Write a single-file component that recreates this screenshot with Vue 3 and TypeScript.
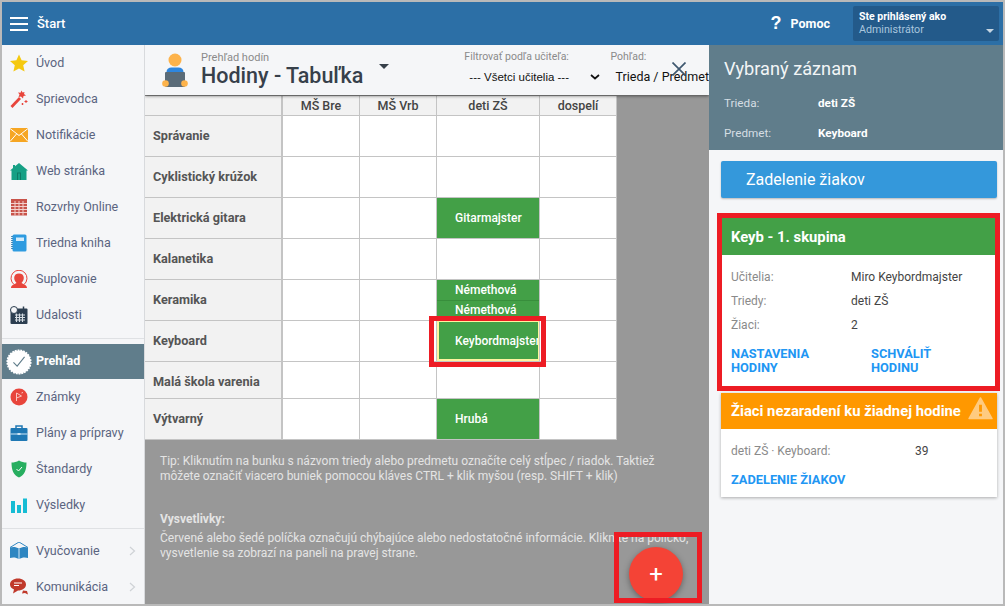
<script setup lang="ts">
interface NavItem {
  id: string;
  label: string;
  arrow?: boolean;
}

interface Cell {
  text: string[];
  marked?: boolean;
}

interface Row {
  name: string;
  short?: boolean;
  cells: Record<number, Cell>;
}

const navTop: NavItem[] = [
  { id: 'star', label: 'Úvod' },
  { id: 'wand', label: 'Sprievodca' },
  { id: 'mail', label: 'Notifikácie' },
  { id: 'home', label: 'Web stránka' },
  { id: 'grid', label: 'Rozvrhy Online' },
  { id: 'book', label: 'Triedna kniha' },
  { id: 'user', label: 'Suplovanie' },
  { id: 'cal', label: 'Udalosti' },
];

const navMid: NavItem[] = [
  { id: 'grade', label: 'Známky' },
  { id: 'case', label: 'Plány a prípravy' },
  { id: 'shield', label: 'Štandardy' },
  { id: 'bars', label: 'Výsledky' },
];

const navBottom: NavItem[] = [
  { id: 'open', label: 'Vyučovanie', arrow: true },
  { id: 'chat', label: 'Komunikácia', arrow: true },
];

const columns = ['MŠ Bre', 'MŠ Vrb', 'deti ZŠ', 'dospelí'];

const rows: Row[] = [
  { name: 'Správanie', cells: {} },
  { name: 'Cyklistický krúžok', cells: {} },
  { name: 'Elektrická gitara', cells: { 2: { text: ['Gitarmajster'] } } },
  { name: 'Kalanetika', cells: {} },
  { name: 'Keramika', cells: { 2: { text: ['Némethová', 'Némethová'] } } },
  { name: 'Keyboard', cells: { 2: { text: ['Keybordmajster'], marked: true } } },
  { name: 'Malá škola varenia', short: true, cells: {} },
  { name: 'Výtvarný', cells: { 2: { text: ['Hrubá'] } } },
];
</script>

<template>
  <div class="screen">
    <header class="topbar">
      <div class="burger"><span></span><span></span><span></span></div>
      <div class="brand">Štart</div>
      <div class="help"><span class="qmark">?</span><span>Pomoc</span></div>
      <div class="account">
        <div class="acc-title">Ste prihlásený ako</div>
        <div class="acc-role">Administrátor</div>
        <i class="acc-caret"></i>
      </div>
    </header>

    <div class="body">
      <nav class="sidebar">
        <div class="nav-group">
          <div v-for="item in navTop" :key="item.id" class="nav-item">
            <svg class="nav-icon" viewBox="1 1 18 18">
              <template v-if="item.id === 'star'">
                <path d="M10 1.500l2.600 5.800 6.400.7-4.800 4.300 1.400 6.300L10 15.400l-5.600 3.200 1.400-6.300L1 8l6.400-.7z" fill="#f5c90f" />
              </template>
              <template v-else-if="item.id === 'wand'">
                <path d="M1.500 17l8.500-9 2 2-8.500 9z" fill="#e8453c" />
                <path d="M12.500 1.500l1 2 2-.5-.5 2 2 1.500-2.500.5-.5 2.500-2-2-2.500.5 1-2.500-1.500-2 2.500.2z" fill="#e8453c" />
                <path d="M15.500 12.500h3M17 11v3M12.500 15h2M13.500 14v2" stroke="#e8453c" stroke-width="1" />
              </template>
              <template v-else-if="item.id === 'mail'">
                <rect x="1" y="3" width="18" height="14" fill="#f6a623" />
                <path d="M1 3.500l9 7 9-7M1 16.500l6.500-7.500M19 16.500L12.500 9" fill="none" stroke="#fff" stroke-width="1" />
              </template>
              <template v-else-if="item.id === 'home'">
                <path d="M10 2l9 7.500h-1.500V19h-15V9.500H1l3-2.500V4h2v1.300z" fill="#16a085" />
                <rect x="8" y="11.500" width="4" height="7.500" fill="#0e7a65" />
                <rect x="9" y="12.500" width="2" height="6.500" fill="#16a085" />
              </template>
              <template v-else-if="item.id === 'grid'">
                <rect x="2" y="2" width="16" height="16.500" fill="#c8534a" />
                <path d="M2 6.500h16M2 9.500h16M2 12.500h16M2 15.500h16M6 4v14.500M10 4v14.500M14 4v14.500" stroke="#f3d0cc" stroke-width="1" />
              </template>
              <template v-else-if="item.id === 'book'">
                <rect x="3.500" y="1.500" width="14" height="17" rx="1.500" fill="#2e9be0" />
                <rect x="7" y="4.500" width="8" height="3.500" fill="#d3ecfb" />
                <path d="M3 3v14" stroke="#1a6fa8" stroke-width="1.500" stroke-dasharray="1 1" />
              </template>
              <template v-else-if="item.id === 'user'">
                <path d="M2 19c0-3 3-3.500 5.500-5-1.500-1.500-2.300-3-2.300-5.200C5.200 6 7.200 4.500 10 4.500s4.800 1.500 4.800 4.300c0 2.200-.8 3.700-2.300 5.200 2.500 1.500 5.500 2 5.500 5z" fill="#e8453c" />
                <path d="M5 15.500a8 8 0 1 1 10 0" fill="none" stroke="#e8453c" stroke-width="1" />
              </template>
              <template v-else>
                <rect x="1.500" y="3.500" width="17" height="15.500" rx="1" fill="#2c3e50" />
                <path d="M6 10h10M6 12.500h10M6 15h10M7.500 8.500v8.500M10.500 8.500v8.500M13.500 8.500v8.500" stroke="#d5dce2" stroke-width="1.100" />
                <circle cx="5" cy="5" r="3.500" fill="#f5f6f8" stroke="#2c3e50" />
                <path d="M14.500 1.500v3" stroke="#2c3e50" stroke-width="1.500" />
              </template>
            </svg>
            <span>{{ item.label }}</span>
          </div>
        </div>

        <div class="nav-line"></div>

        <div class="nav-active">
          <svg class="check" viewBox="0 0 28 28">
            <circle cx="14" cy="14" r="12.500" fill="#fff" stroke="#fff" stroke-width="2" stroke-dasharray="2 1" />
            <path d="M8 14.500l4 4 8-10" fill="none" stroke="#607d8b" stroke-width="1.200" />
          </svg>
          <span>Prehľad</span>
        </div>

        <div class="nav-group">
          <div v-for="item in navMid" :key="item.id" class="nav-item">
            <svg class="nav-icon" viewBox="1 1 18 18">
              <template v-if="item.id === 'grade'">
                <circle cx="10" cy="10" r="8.500" fill="#e8453c" />
                <path d="M7.500 14V6l5 3-5 2M12.500 6l1.500-.5" fill="none" stroke="#f9c5c1" stroke-width="1" />
              </template>
              <template v-else-if="item.id === 'case'">
                <path d="M7 5V3h6v2" fill="none" stroke="#1f78b4" stroke-width="1.500" />
                <rect x="1.500" y="5" width="17" height="13" rx="1" fill="#1f78b4" />
                <path d="M1.500 11h17" stroke="#cfe6f5" stroke-width="1" />
                <rect x="8.500" y="10" width="3" height="2" fill="#cfe6f5" />
              </template>
              <template v-else-if="item.id === 'shield'">
                <path d="M10 1.500c2.500 1.500 5 2 7.500 2 0 8-2 12.500-7.500 15-5.500-2.500-7.500-7-7.500-15 2.500 0 5-.5 7.500-2z" fill="#27ae60" />
                <path d="M7.500 10l2 2 3.500-4" fill="none" stroke="#fff" stroke-width="1" />
              </template>
              <template v-else>
                <rect x="2" y="6" width="4" height="12" fill="#16bcd4" />
                <rect x="8" y="10" width="4" height="8" fill="#16bcd4" />
                <rect x="14" y="3.500" width="4" height="14.500" fill="#16bcd4" />
              </template>
            </svg>
            <span>{{ item.label }}</span>
          </div>
        </div>

        <div class="nav-line second"></div>

        <div class="nav-group">
          <div v-for="item in navBottom" :key="item.id" class="nav-item">
            <svg class="nav-icon" viewBox="1 1 18 18">
              <template v-if="item.id === 'open'">
                <path d="M1 6.500L10 1l9 5.500" fill="none" stroke="#2e86c1" stroke-width="1" />
                <path d="M1 6.500c3-1 6.500-.5 9 1 2.500-1.500 6-2 9-1V17c-3-1-6.500-.5-9 1-2.500-1.500-6-2-9-1z" fill="#2e86c1" />
                <path d="M10 7.500V18" stroke="#d6eaf8" stroke-width="1" />
              </template>
              <template v-else>
                <path d="M9 1.500c4.500 0 8 2.500 8 6s-3.500 6-8 6l-5 3 1-4C2.500 11.500 1 9.500 1 7.500c0-3.500 3.500-6 8-6z" fill="#c0392b" />
                <path d="M5 6h8M5 8.500h5" stroke="#fff" stroke-width="1" />
                <path d="M14 13.500l4 .5 1 3.500-3-1.500-3 .5z" fill="#c0392b" />
              </template>
            </svg>
            <span>{{ item.label }}</span>
            <svg v-if="item.arrow" class="chev" viewBox="0 0 7 10">
              <path d="M1 1l4.500 4L1 9" fill="none" stroke="#cfd2d6" stroke-width="1.200" />
            </svg>
          </div>
        </div>
      </nav>

      <main class="main">
        <div class="pagehead">
          <svg class="avatar" viewBox="0 0 26 36">
            <circle cx="13" cy="8" r="6.500" fill="#fdb34b" />
            <path d="M4.500 20c0-3 2-4.500 5-4.500h7c3 0 5 1.500 5 4.500v1h-17z" fill="#2e86de" />
            <rect x="3" y="20" width="20" height="15" rx="1" fill="#5a6b78" />
            <circle cx="3.500" cy="31.500" r="3.300" fill="#fdb34b" />
            <circle cx="22.500" cy="31.500" r="3.300" fill="#fdb34b" />
          </svg>
          <div class="titles">
            <div class="subtitle">Prehľad hodín</div>
            <div class="title">Hodiny - Tabuľka</div>
          </div>
          <i class="title-caret"></i>
          <div class="filter teacher">
            <label>Filtrovať podľa učiteľa:</label>
            <div class="select">
              <span>--- Všetci učitelia ---</span>
              <svg viewBox="0 0 10 6"><path d="M1 1l4 3.500L9 1" fill="none" stroke="#111" stroke-width="1.700" /></svg>
            </div>
          </div>
          <div class="filter view">
            <label>Pohľad:</label>
            <div class="select">Trieda / Predmet</div>
          </div>
          <svg class="close" viewBox="0 0 14 14">
            <path d="M.5.5l13 13M13.500.5l-13 13" stroke="#3f5870" stroke-width="1.700" />
          </svg>
        </div>

        <div class="content">
          <div class="table">
            <div class="th corner"></div>
            <div v-for="col in columns" :key="col" class="th">{{ col }}</div>
            <template v-for="row in rows" :key="row.name">
              <div class="rowname" :class="{ short: row.short }">{{ row.name }}</div>
              <div v-for="(col, i) in columns" :key="col" class="cell">
                <div
                  v-if="row.cells[i]"
                  class="lesson"
                  :class="{ marked: row.cells[i].marked, split: row.cells[i].text.length > 1 }"
                >
                  <div v-for="(t, n) in row.cells[i].text" :key="n" class="lesson-part">{{ t }}</div>
                </div>
              </div>
            </template>
          </div>

          <div class="notes">
            <p class="tip">Tip: Kliknutím na bunku s názvom triedy alebo predmetu označíte celý stĺpec / riadok. Taktiež môžete označiť viacero buniek pomocou kláves CTRL + klik myšou (resp. SHIFT + klik)</p>
            <p class="legend-title">Vysvetlivky:</p>
            <p class="legend">Červené alebo šedé políčka označujú chýbajúce alebo nedostatočné informácie. Kliknite na políčko, vysvetlenie sa zobrazí na paneli na pravej strane.</p>
          </div>
        </div>
        <div class="fab">+</div>
      </main>

      <aside class="panel">
        <div class="panel-head">
          <h2>Vybraný záznam</h2>
          <div class="head-row"><span>Trieda:</span><b>deti ZŠ</b></div>
          <div class="head-row"><span>Predmet:</span><b>Keyboard</b></div>
        </div>
        <div class="panel-body">
          <div class="assign">Zadelenie žiakov</div>
          <section class="card">
            <div class="card-head green">Keyb - 1. skupina</div>
            <div class="card-body">
              <div class="info"><span>Učitelia:</span><em>Miro Keybordmajster</em></div>
              <div class="info"><span>Triedy:</span><em>deti ZŠ</em></div>
              <div class="info"><span>Žiaci:</span><em>2</em></div>
              <div class="links">
                <a>NASTAVENIA HODINY</a>
                <a>SCHVÁLIŤ HODINU</a>
              </div>
            </div>
          </section>
          <section class="card warn">
            <div class="card-head orange">
              Žiaci nezaradení ku žiadnej hodine
              <svg class="warn-icon" viewBox="0 0 26 24">
                <path d="M13 1l12 21.500H1z" fill="#ffcb80" stroke="#ffcb80" stroke-width="1.500" stroke-linejoin="round" />
                <path d="M13 8v7.500M13 17.500v2.500" stroke="#ff9800" stroke-width="3" />
              </svg>
            </div>
            <div class="card-body">
              <div class="info wide"><span>deti ZŠ · Keyboard:</span><em>39</em></div>
              <div class="links single"><a>ZADELENIE ŽIAKOV</a></div>
            </div>
          </section>
        </div>
      </aside>
    </div>

    <div class="frame frame-cell"></div>
    <div class="frame frame-card"></div>
    <div class="frame frame-fab"></div>
  </div>
</template>

<style scoped>
.screen {
  position: relative;
  box-sizing: border-box;
  width: 1005px;
  height: 606px;
  padding: 2px;
  background: #b9b9b9;
  display: flex;
  flex-direction: column;
  overflow: hidden;
  font-family: Roboto, "Liberation Sans", sans-serif;
  color: #333;
}

.topbar {
  flex: 0 0 43px;
  display: flex;
  align-items: center;
  background: #2c6fa6;
  color: #fff;
  padding-left: 8px;
}
.burger {
  width: 18px;
  display: flex;
  flex-direction: column;
  gap: 4px;
}
.burger span {
  height: 2px;
  background: #fff;
}
.brand {
  margin-left: 9px;
  font-size: 13px;
  font-weight: 500;
}
.help {
  margin-left: auto;
  display: flex;
  align-items: center;
  font-size: 12.500px;
  font-weight: 700;
}
.qmark {
  font-size: 18px;
  margin-right: 9px;
  font-family: "Liberation Sans", sans-serif;
}
.account {
  position: relative;
  box-sizing: border-box;
  width: 146px;
  height: 35px;
  margin: 0 4px 0 23px;
  padding: 5px 6px;
  background: #235a8a;
  border-radius: 2px;
}
.acc-title {
  font-size: 10.500px;
  font-weight: 700;
  line-height: 12px;
}
.acc-role {
  font-size: 10.700px;
  line-height: 14px;
  color: #a9c6de;
}
.acc-caret {
  position: absolute;
  right: 5px;
  bottom: 8px;
  border: 4px solid transparent;
  border-top-color: #c5d5e2;
  border-bottom-width: 0;
}

.body {
  flex: 1;
  min-height: 0;
  display: flex;
}

.sidebar {
  flex: 0 0 143px;
  box-sizing: border-box;
  background: #f5f6f8;
  border-right: 1px solid #d8dadd;
}
.nav-item {
  height: 36px;
  display: flex;
  align-items: center;
  padding-left: 8px;
  font-size: 12.500px;
  color: #5a6480;
}
.nav-item span,
.nav-active span {
  margin-bottom: 2px;
}
.nav-icon {
  width: 18px;
  height: 18px;
  flex: none;
  margin-right: 8px;
}
.chev {
  width: 7px;
  height: 10px;
  margin-left: auto;
  margin-right: 8px;
}
.nav-line {
  height: 1px;
  background: #dfe1e4;
  margin-top: 5px;
}
.nav-line.second {
  margin-bottom: 4px;
}
.nav-active {
  height: 35px;
  margin-top: 5px;
  display: flex;
  align-items: center;
  padding-left: 4px;
  background: #607d8b;
  color: #fff;
  font-size: 12.500px;
  font-weight: 700;
}
.check {
  width: 26px;
  height: 26px;
  margin-right: 4px;
}

.main {
  position: relative;
  flex: 0 0 564px;
  display: flex;
  flex-direction: column;
  background: #989898;
  overflow: hidden;
}

.pagehead {
  position: relative;
  z-index: 1;
  flex: 0 0 50px;
  display: flex;
  align-items: center;
  background: #f5f6f8;
  box-shadow: 0 1px 3px rgba(0, 0, 0, 0.5);
  white-space: nowrap;
}
.avatar {
  width: 26px;
  height: 36px;
  margin-left: 17px;
  flex: none;
}
.titles {
  margin-left: 13px;
  width: 183px;
}
.subtitle {
  font-size: 11px;
  color: #8a8a8a;
  line-height: 12px;
}
.title {
  font-size: 21.500px;
  font-weight: 500;
  line-height: 24px;
  color: #37404a;
}
.title-caret {
  margin: -8px 0 0 0;
  border: 5px solid transparent;
  border-top-color: #37404a;
  border-bottom-width: 0;
}
.filter {
  align-self: stretch;
  padding-top: 5px;
}
.filter label {
  display: block;
  font-size: 10.500px;
  line-height: 13px;
  color: #8a8a8a;
}
.select {
  display: flex;
  align-items: center;
  margin-top: 6px;
  font-size: 12.500px;
  line-height: 16px;
  color: #111;
}
.teacher {
  margin-left: 75px;
  width: 150px;
}
.teacher .select {
  padding: 0 11px 0 5px;
  font-family: "Liberation Sans", sans-serif;
  font-size: 11.500px;
}
.teacher .select svg {
  width: 10px;
  height: 6px;
  margin-left: auto;
}
.view .select {
  padding-left: 5px;
}
.close {
  position: absolute;
  left: 527px;
  top: 17px;
  width: 14px;
  height: 14px;
}

.content {
  flex: 1;
  min-height: 0;
  padding-top: 1px;
}

.table {
  display: grid;
  grid-template-columns: 138px 77px 77px 103px 77px;
  grid-template-rows: 20px repeat(6, 41px) 37px 41px;
  width: 472px;
  background: #fff;
}
.th {
  box-sizing: border-box;
  background: #f2f2f2;
  border-right: 1px solid #c4c4c4;
  border-bottom: 1px solid #c4c4c4;
  font-size: 12.500px;
  font-weight: 500;
  line-height: 19px;
  text-align: center;
  color: #444;
}
.corner {
  border-right-width: 2px;
}
.rowname {
  box-sizing: border-box;
  display: flex;
  align-items: center;
  padding: 0 0 2px 8px;
  background: #f2f2f2;
  border-right: 2px solid #c4c4c4;
  border-bottom: 1px solid #c4c4c4;
  font-size: 12.700px;
  font-weight: 700;
  color: #555;
}
.rowname.short {
  padding: 2px 0 0 8px;
}
.cell {
  box-sizing: border-box;
  background: #fff;
  border-right: 1px solid #c4c4c4;
  border-bottom: 1px solid #c4c4c4;
  min-height: 0;
}
.lesson {
  box-sizing: border-box;
  height: 100%;
  display: flex;
  flex-direction: column;
  background: #43a047;
  color: #fff;
  font-size: 12px;
  font-weight: 500;
  white-space: nowrap;
  overflow: hidden;
}
.lesson-part {
  flex: 1;
  display: flex;
  align-items: center;
  padding-left: 18px;
}
.split .lesson-part + .lesson-part {
  border-top: 1px solid #388e3c;
}
.marked {
  border: 1px solid #fff3a0;
  border-left-width: 2px;
  border-bottom-width: 2px;
}
.marked .lesson-part {
  padding-left: 16px;
}

.notes {
  padding: 0 15px;
  font-size: 12px;
  line-height: 15px;
  color: #e4e4e4;
}
.notes p {
  margin: 0;
}
.tip {
  width: 510px;
  padding-top: 14px;
}
.legend-title {
  margin-top: 28px !important;
  font-weight: 700;
}
.legend {
  margin-top: 4px !important;
}

.fab {
  position: absolute;
  left: 484px;
  bottom: 3px;
  width: 54px;
  height: 54px;
  border-radius: 50%;
  background: #f44336;
  box-shadow: 0 2px 6px rgba(0, 0, 0, 0.35);
  color: #fff;
  font-size: 24px;
  line-height: 54px;
  text-align: center;
}

.panel {
  flex: 1;
  min-width: 0;
  display: flex;
  flex-direction: column;
  background: #f5f6f8;
}
.panel-head {
  height: 105px;
  box-sizing: border-box;
  padding: 13px 15px 0;
  background: #607d8b;
  color: #fff;
}
.panel-head h2 {
  margin: 0 0 8px;
  font-size: 18.200px;
  font-weight: 400;
  line-height: 22px;
  color: #f2f5f6;
}
.head-row {
  display: flex;
  height: 30px;
  align-items: center;
  font-size: 11.700px;
}
.head-row span {
  width: 94px;
  color: #d5dee3;
}
.head-row b {
  font-weight: 700;
}
.panel-body {
  flex: 1;
  padding: 11px 6px 0 12px;
}
.assign {
  height: 37px;
  padding-left: 25px;
  line-height: 37px;
  font-size: 16px;
  color: #fff;
  background: #3498db;
  border-radius: 2px;
  box-shadow: 0 1px 2px rgba(0, 0, 0, 0.25);
}
.card {
  margin-top: 20px;
  background: #fff;
  height: 168px;
}
.card.warn {
  margin-top: 7px;
  height: 104px;
  box-shadow: 0 1px 3px rgba(0, 0, 0, 0.3);
}
.card-head {
  position: relative;
  box-sizing: border-box;
  height: 37px;
  padding-left: 10px;
  line-height: 38px;
  font-size: 14.800px;
  font-weight: 700;
  color: #fff;
  white-space: nowrap;
}
.green {
  background: #43a047;
}
.orange {
  height: 36px;
  background: #ff9800;
  line-height: 36px;
}
.warn-icon {
  position: absolute;
  right: 4px;
  top: 4px;
  width: 25px;
  height: 23px;
}
.card-body {
  padding: 10px 10px 0;
  font-size: 12px;
}
.info {
  display: flex;
  height: 24px;
  align-items: center;
}
.info span {
  width: 120px;
  color: #8a8a8a;
}
.info em {
  font-style: normal;
  color: #444;
}
.info.wide span {
  width: 184px;
}
.links {
  display: grid;
  grid-template-columns: 140px 110px;
  margin-top: 10px;
  font-size: 12.800px;
  font-weight: 700;
  line-height: 14px;
  color: #2196f3;
}
.links.single {
  display: block;
  margin-top: 10px;
}
.links a {
  display: block;
  width: 100px;
}
.links.single a {
  width: auto;
}

.frame {
  position: absolute;
  box-sizing: border-box;
  border: 5px solid #ed1c24;
  pointer-events: none;
}
.frame-cell {
  left: 429px;
  top: 316px;
  width: 117px;
  height: 51px;
}
.frame-card {
  left: 717px;
  top: 213px;
  width: 283px;
  height: 178px;
}
.frame-fab {
  left: 614px;
  top: 532px;
  width: 88px;
  height: 71px;
}
</style>
